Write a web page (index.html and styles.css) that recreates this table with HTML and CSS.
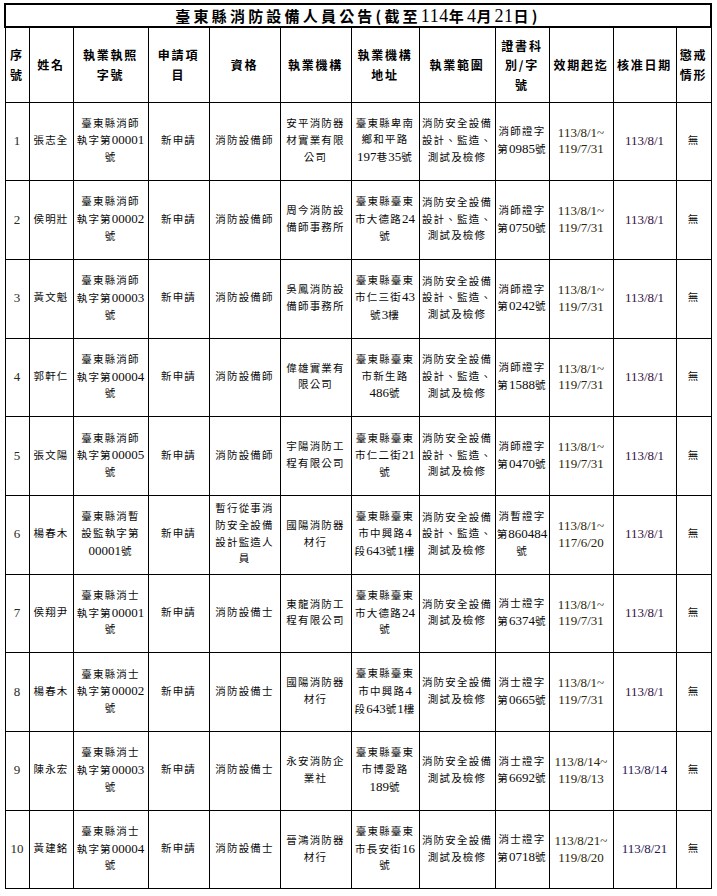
FILE: index.html
```html
<!DOCTYPE html>
<html lang="zh-Hant">
<head>
<meta charset="utf-8">
<title>臺東縣消防設備人員公告</title>
<link rel="stylesheet" href="styles.css">
</head>
<body>
<table class="sheet">
  <colgroup>
    <col class="c-no"><col class="c-name"><col class="c-lic"><col class="c-app"><col class="c-qual"><col class="c-org"><col class="c-addr"><col class="c-scope"><col class="c-cert"><col class="c-period"><col class="c-date"><col class="c-pen">
  </colgroup>
  <thead>
    <tr class="title-row">
      <th colspan="12" class="title">臺東縣消防設備人員公告(截至<span class="tn">114</span>年<span class="tn">4</span>月<span class="tn">21</span>日)</th>
    </tr>
    <tr class="head-row">
      <th>序<br>號</th>
      <th>姓名</th>
      <th>執業執照<br>字號</th>
      <th>申請項<br>目</th>
      <th>資格</th>
      <th>執業機構</th>
      <th>執業機構<br>地址</th>
      <th>執業範圍</th>
      <th>證書科<br>別/字<br>號</th>
      <th>效期起迄</th>
      <th>核准日期</th>
      <th>懲戒<br>情形</th>
    </tr>
  </thead>
  <tbody>
    <tr>
      <td class="idx">1</td>
      <td>張志全</td>
      <td>臺東縣消師<br>執字第<span class="n">00001</span><br>號</td>
      <td>新申請</td>
      <td>消防設備師</td>
      <td>安平消防器<br>材實業有限<br>公司</td>
      <td>臺東縣卑南<br>鄉和平路<br><span class="n">197</span>巷<span class="n">35</span>號</td>
      <td>消防安全設備<br>設計、監造、<br>測試及檢修</td>
      <td>消師證字<br>第<span class="n">0985</span>號</td>
      <td class="period">113/8/1~<br>119/7/31</td>
      <td class="approved">113/8/1</td>
      <td>無</td>
    </tr>
    <tr>
      <td class="idx">2</td>
      <td>侯明壯</td>
      <td>臺東縣消師<br>執字第<span class="n">00002</span><br>號</td>
      <td>新申請</td>
      <td>消防設備師</td>
      <td>周今消防設<br>備師事務所</td>
      <td>臺東縣臺東<br>市大德路<span class="n">24</span><br>號</td>
      <td>消防安全設備<br>設計、監造、<br>測試及檢修</td>
      <td>消師證字<br>第<span class="n">0750</span>號</td>
      <td class="period">113/8/1~<br>119/7/31</td>
      <td class="approved">113/8/1</td>
      <td>無</td>
    </tr>
    <tr>
      <td class="idx">3</td>
      <td>黃文魁</td>
      <td>臺東縣消師<br>執字第<span class="n">00003</span><br>號</td>
      <td>新申請</td>
      <td>消防設備師</td>
      <td>吳鳳消防設<br>備師事務所</td>
      <td>臺東縣臺東<br>市仁三街<span class="n">43</span><br>號<span class="n">3</span>樓</td>
      <td>消防安全設備<br>設計、監造、<br>測試及檢修</td>
      <td>消師證字<br>第<span class="n">0242</span>號</td>
      <td class="period">113/8/1~<br>119/7/31</td>
      <td class="approved">113/8/1</td>
      <td>無</td>
    </tr>
    <tr>
      <td class="idx">4</td>
      <td>郭軒仁</td>
      <td>臺東縣消師<br>執字第<span class="n">00004</span><br>號</td>
      <td>新申請</td>
      <td>消防設備師</td>
      <td>偉雄實業有<br>限公司</td>
      <td>臺東縣臺東<br>市新生路<br><span class="n">486</span>號</td>
      <td>消防安全設備<br>設計、監造、<br>測試及檢修</td>
      <td>消師證字<br>第<span class="n">1588</span>號</td>
      <td class="period">113/8/1~<br>119/7/31</td>
      <td class="approved">113/8/1</td>
      <td>無</td>
    </tr>
    <tr>
      <td class="idx">5</td>
      <td>張文陽</td>
      <td>臺東縣消師<br>執字第<span class="n">00005</span><br>號</td>
      <td>新申請</td>
      <td>消防設備師</td>
      <td>宇陽消防工<br>程有限公司</td>
      <td>臺東縣臺東<br>市仁二街<span class="n">21</span><br>號</td>
      <td>消防安全設備<br>設計、監造、<br>測試及檢修</td>
      <td>消師證字<br>第<span class="n">0470</span>號</td>
      <td class="period">113/8/1~<br>119/7/31</td>
      <td class="approved">113/8/1</td>
      <td>無</td>
    </tr>
    <tr>
      <td class="idx">6</td>
      <td>楊春木</td>
      <td>臺東縣消暫<br>設監執字第<br><span class="n">00001</span>號</td>
      <td>新申請</td>
      <td>暫行從事消<br>防安全設備<br>設計監造人<br>員</td>
      <td>國陽消防器<br>材行</td>
      <td>臺東縣臺東<br>市中興路<span class="n">4</span><br>段<span class="n">643</span>號<span class="n">1</span>樓</td>
      <td>消防安全設備<br>設計、監造、<br>測試及檢修</td>
      <td>消暫證字<br>第<span class="n">860484</span><br>號</td>
      <td class="period">113/8/1~<br>117/6/20</td>
      <td class="approved">113/8/1</td>
      <td>無</td>
    </tr>
    <tr>
      <td class="idx">7</td>
      <td>侯翔尹</td>
      <td>臺東縣消士<br>執字第<span class="n">00001</span><br>號</td>
      <td>新申請</td>
      <td>消防設備士</td>
      <td>東龍消防工<br>程有限公司</td>
      <td>臺東縣臺東<br>市大德路<span class="n">24</span><br>號</td>
      <td>消防安全設備<br>測試及檢修</td>
      <td>消士證字<br>第<span class="n">6374</span>號</td>
      <td class="period">113/8/1~<br>119/7/31</td>
      <td class="approved">113/8/1</td>
      <td>無</td>
    </tr>
    <tr>
      <td class="idx">8</td>
      <td>楊春木</td>
      <td>臺東縣消士<br>執字第<span class="n">00002</span><br>號</td>
      <td>新申請</td>
      <td>消防設備士</td>
      <td>國陽消防器<br>材行</td>
      <td>臺東縣臺東<br>市中興路<span class="n">4</span><br>段<span class="n">643</span>號<span class="n">1</span>樓</td>
      <td>消防安全設備<br>測試及檢修</td>
      <td>消士證字<br>第<span class="n">0665</span>號</td>
      <td class="period">113/8/1~<br>119/7/31</td>
      <td class="approved">113/8/1</td>
      <td>無</td>
    </tr>
    <tr>
      <td class="idx">9</td>
      <td>陳永宏</td>
      <td>臺東縣消士<br>執字第<span class="n">00003</span><br>號</td>
      <td>新申請</td>
      <td>消防設備士</td>
      <td>永安消防企<br>業社</td>
      <td>臺東縣臺東<br>市博愛路<br><span class="n">189</span>號</td>
      <td>消防安全設備<br>測試及檢修</td>
      <td>消士證字<br>第<span class="n">6692</span>號</td>
      <td class="period">113/8/14~<br>119/8/13</td>
      <td class="approved new">113/8/14</td>
      <td>無</td>
    </tr>
    <tr>
      <td class="idx">10</td>
      <td>黃建銘</td>
      <td>臺東縣消士<br>執字第<span class="n">00004</span><br>號</td>
      <td>新申請</td>
      <td>消防設備士</td>
      <td>晉鴻消防器<br>材行</td>
      <td>臺東縣臺東<br>市長安街<span class="n">16</span><br>號</td>
      <td>消防安全設備<br>測試及檢修</td>
      <td>消士證字<br>第<span class="n">0718</span>號</td>
      <td class="period">113/8/21~<br>119/8/20</td>
      <td class="approved new">113/8/21</td>
      <td>無</td>
    </tr>
  </tbody>
</table>
</body>
</html>
```
FILE: styles.css
```css
html, body {
  background: #ffffff;
}
body {
  margin: 0;
  padding: 3px 0 0 4px;
  font-family: "Liberation Serif", "Noto Sans CJK TC", serif;
  color: #111111;
}
.sheet {
  border-collapse: collapse;
  table-layout: fixed;
  width: 706px;
}
.c-no { width: 24px; }
.c-name { width: 44px; }
.c-lic { width: 75px; }
.c-app { width: 61px; }
.c-qual { width: 71px; }
.c-org { width: 71px; }
.c-addr { width: 68px; }
.c-scope { width: 76px; }
.c-cert { width: 54px; }
.c-period { width: 64px; }
.c-date { width: 63px; }
.c-pen { width: 35px; }

.sheet th, .sheet td {
  border: 1px solid #000000;
  padding: 0;
  text-align: center;
  vertical-align: middle;
  white-space: nowrap;
  overflow: hidden;
}
.title-row { height: 23px; }
.sheet .title {
  border: 2px solid #000000;
  font-family: "Noto Sans CJK TC", sans-serif;
  font-size: 15px;
  font-weight: 700;
  letter-spacing: 3.2px;
  line-height: 19px;
  color: #000000;
}
.title .tn {
  font-family: "Liberation Serif", serif;
  font-size: 18px;
  font-weight: 400;
  letter-spacing: 0.5px;
}
.head-row { height: 75px; }
.head-row th {
  font-family: "Noto Sans CJK TC", sans-serif;
  font-size: 12px;
  font-weight: 700;
  letter-spacing: 1.8px;
  line-height: 19.5px;
  color: #000000;
}
tbody tr { height: 78.7px; }
tbody td {
  font-size: 10.5px;
  letter-spacing: 1.2px;
  line-height: 16.7px;
  color: #0a0a0a;
}
tbody td .n {
  font-family: "Liberation Serif", serif;
  font-size: 13px;
  letter-spacing: 0;
}
tbody td.idx {
  font-size: 13px;
  letter-spacing: 0;
  color: #2a2a18;
}
tbody td.period {
  font-size: 13px;
  letter-spacing: 0;
  color: #2c2608;
}
tbody td.approved {
  font-size: 13px;
  letter-spacing: 0;
  color: #351040;
}
tbody td.approved.new {
  color: #2a1450;
}
```
